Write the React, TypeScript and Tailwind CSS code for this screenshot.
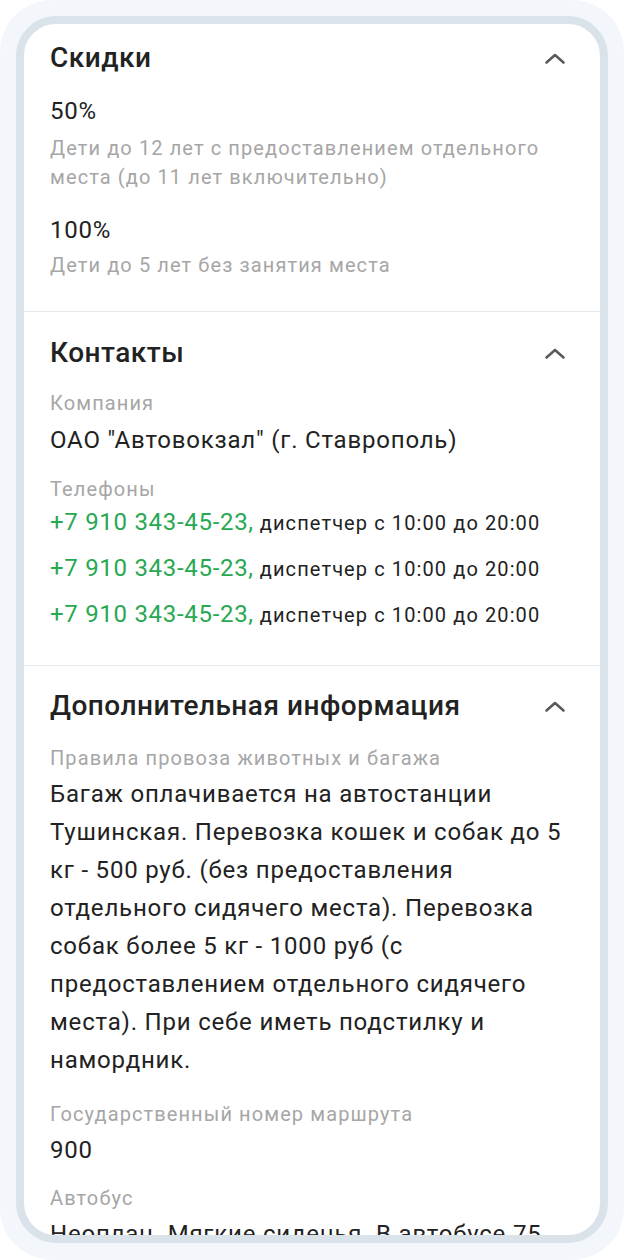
import React from "react";

const font = { fontFamily: "Roboto, 'Noto Sans', sans-serif" };

function ChevronUp() {
  return (
    <svg className="h-[14px] w-[24px]" viewBox="0 0 24 14" fill="none" stroke="#5a5a5a" strokeWidth={2.6} strokeLinecap="round" strokeLinejoin="round">
      <path d="M3.5 11.5l8.5-7.5 8.5 7.5" />
    </svg>
  );
}

function SectionHeader({ title }: { title: string }) {
  return (
    <div className="flex h-[36px] items-center justify-between">
      <h2 className="text-[28px] font-medium leading-[36px] tracking-[0.5px] text-[#222222]">{title}</h2>
      <div className="mr-[7px]">
        <ChevronUp />
      </div>
    </div>
  );
}

function Label({ children, className = "" }: { children: React.ReactNode; className?: string }) {
  return (
    <div className={`text-[20px] leading-[29px] tracking-[1.1px] text-[#a6a6a6] ${className}`}>{children}</div>
  );
}

function Value({ children, className = "" }: { children: React.ReactNode; className?: string }) {
  return (
    <div className={`text-[24px] leading-[32px] tracking-[0.8px] text-[#222222] ${className}`}>{children}</div>
  );
}

function Phone() {
  return (
    <div className="flex h-[32px] items-baseline whitespace-nowrap">
      <span className="text-[24px] leading-[32px] tracking-[0.7px] text-[#29a852]">+7 910 343-45-23,</span>
      <span className="ml-[6px] text-[20px] leading-[32px] tracking-[1.1px] text-[#222222]">
        диспетчер с 10:00 до 20:00
      </span>
    </div>
  );
}

export default function App() {
  return (
    <div className="h-[1260px] w-[624px] bg-white" style={font}>
      <div className="h-full rounded-[52px] bg-[#f3f7fb] px-[16px] pt-[16px] pb-[17px]">
        <div className="h-full overflow-hidden rounded-[40px] border-[8px] border-[#dae2ea] bg-white">
          {/* Скидки */}
          <section className="border-b border-[#e6e8eb] px-[26px] pt-[16px] pb-[31px]">
            <SectionHeader title="Скидки" />
            <Value className="mt-[19px]">50%</Value>
            <Label className="mt-[7px]">
              Дети до 12 лет с предоставлением отдельного места (до 11 лет включительно)
            </Label>
            <Value className="mt-[22px]">100%</Value>
            <Label className="mt-[5px]">Дети до 5 лет без занятия места</Label>
          </section>

          {/* Контакты */}
          <section className="border-b border-[#e6e8eb] px-[26px] pt-[23px] pb-[35px]">
            <SectionHeader title="Контакты" />
            <Label className="mt-[18px]">Компания</Label>
            <Value className="mt-[6px]">ОАО "Автовокзал" (г. Ставрополь)</Value>
            <Label className="mt-[19px]">Телефоны</Label>
            <div className="mt-[2px] flex flex-col gap-[14px]">
              <Phone />
              <Phone />
              <Phone />
            </div>
          </section>

          {/* Дополнительная информация */}
          <section className="px-[26px] pt-[22px]">
            <SectionHeader title="Дополнительная информация" />
            <Label className="mt-[20px]">Правила провоза животных и багажа</Label>
            <div className="mt-[2px] text-[24px] leading-[38px] tracking-[0.8px] text-[#222222]">
              Багаж оплачивается на автостанции Тушинская. Перевозка кошек и собак до 5 кг - 500 руб. (без
              предоставления отдельного сидячего места). Перевозка собак более 5 кг - 1000 руб (с
              предоставлением отдельного сидячего места). При себе иметь подстилку и намордник.
            </div>
            <Label className="mt-[21px]">Государственный номер маршрута</Label>
            <Value className="mt-[5px]">900</Value>
            <Label className="mt-[18px]">Автобус</Label>
            <div className="mt-[2px] text-[24px] leading-[38px] tracking-[0.8px] text-[#222222]">
              Неоплан. Мягкие сиденья. В автобусе 75 мест, кондиционер, телевизор.
            </div>
          </section>
        </div>
      </div>
    </div>
  );
}
